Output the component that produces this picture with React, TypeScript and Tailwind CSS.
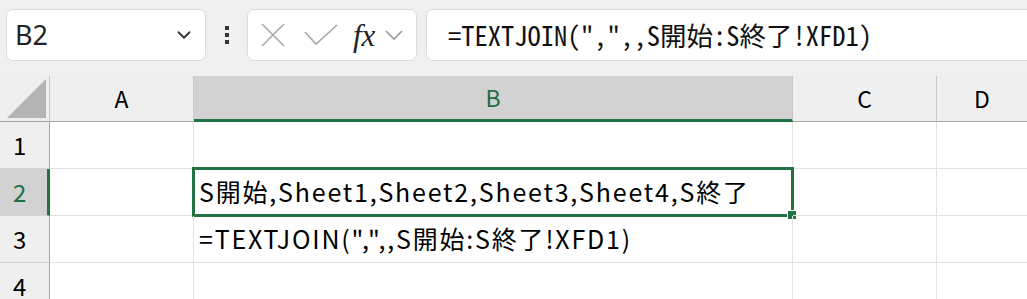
import { ChevronDown } from "lucide-react";

const cellFont = { fontFamily: '"Noto Sans CJK JP", "Noto Sans", sans-serif' };

function ColHeader({ label, active, last }: { label: string; active?: boolean; last?: boolean }) {
  return (
    <div
      className={`flex items-center justify-center text-[23px] ${last ? "" : "border-r"} border-[#c8c8c8] ${
        active
          ? "bg-[#d2d2d2] text-[#1e6e43] border-b-[3px] border-b-[#217346]"
          : "bg-[#efefef] text-black border-b border-b-[#a5a5a5]"
      }`}
      style={cellFont}
    >
      {label}
    </div>
  );
}

function RowHeader({ n, active }: { n: number; active?: boolean }) {
  return (
    <div
      className={`flex items-center pl-[13px] text-[24px] border-b border-[#d4d4d4] ${
        active
          ? "bg-[#d2d2d2] text-[#1e6e43] border-r-[3px] border-r-[#217346]"
          : "bg-[#efefef] text-black border-r border-r-[#a5a5a5]"
      }`}
      style={cellFont}
    >
      {n}
    </div>
  );
}

function Cell({ children, last }: { children?: React.ReactNode; last?: boolean }) {
  return (
    <div
      className={`relative flex items-center border-b border-[#e1e1e1] ${last ? "" : "border-r"} whitespace-nowrap text-[25px] tracking-[1.8px] text-black pl-[5px]`}
      style={cellFont}
    >
      {children}
    </div>
  );
}

export default function App() {
  const rows = [1, 2, 3, 4];
  return (
    <div className="w-[1027px] h-[299px] overflow-hidden bg-white">
      {/* formula bar */}
      <div className="h-[76px] bg-[#f0f0f0] flex items-start pt-[9px] pl-[6px] overflow-hidden">
        <div className="w-[200px] h-[52px] shrink-0 bg-white rounded-[7px] border border-[#dcdcdc] flex items-center justify-between pl-[8px] pr-[10px]">
          <span className="text-[27px] text-[#222]" style={{ fontFamily: '"Noto Sans", sans-serif' }}>
            B2
          </span>
          <ChevronDown size={22} strokeWidth={2} className="text-[#333]" />
        </div>
        <div className="w-[41px] h-[52px] shrink-0 flex flex-col items-center justify-center gap-[3px]">
          <span className="w-[4px] h-[4px] bg-[#333]" />
          <span className="w-[4px] h-[4px] bg-[#333]" />
          <span className="w-[4px] h-[4px] bg-[#333]" />
        </div>
        <div className="w-[170px] h-[52px] shrink-0 bg-white rounded-[7px] border border-[#dcdcdc] flex items-center pl-[12px]">
          <svg width="26" height="26" viewBox="0 0 26 26" className="shrink-0">
            <path d="M2 2 L24 24 M24 2 L2 24" stroke="#a8a8a8" strokeWidth="1.6" fill="none" />
          </svg>
          <svg width="34" height="22" viewBox="0 0 34 22" className="ml-[18px] shrink-0">
            <path d="M1 8 L12 20 L33 1" stroke="#a8a8a8" strokeWidth="1.6" fill="none" />
          </svg>
          <span
            className="ml-[15px] text-[31px] italic text-[#222] leading-none"
            style={{ fontFamily: '"Liberation Serif", serif' }}
          >
            fx
          </span>
          <svg width="18" height="12" viewBox="0 0 18 12" className="ml-[10px] shrink-0">
            <path d="M1 2 L9 10 L17 2" stroke="#9a9a9a" strokeWidth="1.6" fill="none" />
          </svg>
        </div>
        <div className="ml-[9px] w-[640px] h-[52px] shrink-0 bg-white rounded-[7px] border border-[#dcdcdc] flex items-center pl-[21px]">
          <span
            className="text-[26.5px] text-[#111] whitespace-pre"
            style={{ fontFamily: '"Noto Sans Mono CJK JP", "DejaVu Sans Mono", monospace' }}
          >
            =TEXTJOIN(",",,S開始:S終了!XFD1)
          </span>
        </div>
      </div>

      {/* grid */}
      <div className="grid grid-cols-[50px_144px_599px_144px_1fr] grid-rows-[46px_47px_47px_47px_47px]">
        <div className="bg-[#efefef] border-r border-b border-r-[#c8c8c8] border-b-[#a5a5a5] flex items-end justify-end pr-[3px] pb-[3px]">
          <svg width="39" height="39" viewBox="0 0 39 39">
            <path d="M39 0 L39 39 L0 39 Z" fill="#b4b4b4" />
          </svg>
        </div>
        <ColHeader label="A" />
        <ColHeader label="B" active />
        <ColHeader label="C" />
        <ColHeader label="D" last />

        {rows.map((r) => (
          <div key={r} className="contents">
            <RowHeader n={r} active={r === 2} />
            <Cell />
            <Cell>
              {r === 2 && (
                <>
                  <span className="absolute -left-[2px] -top-[2px] right-[-2px] bottom-[-2px] border-[3px] border-[#217346] pointer-events-none" />
                  <span className="absolute right-[-5px] bottom-[-5px] w-[8px] h-[8px] bg-[#217346] border border-white box-content" />
                  <span className="relative">S開始,Sheet1,Sheet2,Sheet3,Sheet4,S終了</span>
                </>
              )}
              {r === 3 && <span>=TEXTJOIN(",",,S開始:S終了!XFD1)</span>}
            </Cell>
            <Cell />
            <Cell last />
          </div>
        ))}
      </div>
    </div>
  );
}
